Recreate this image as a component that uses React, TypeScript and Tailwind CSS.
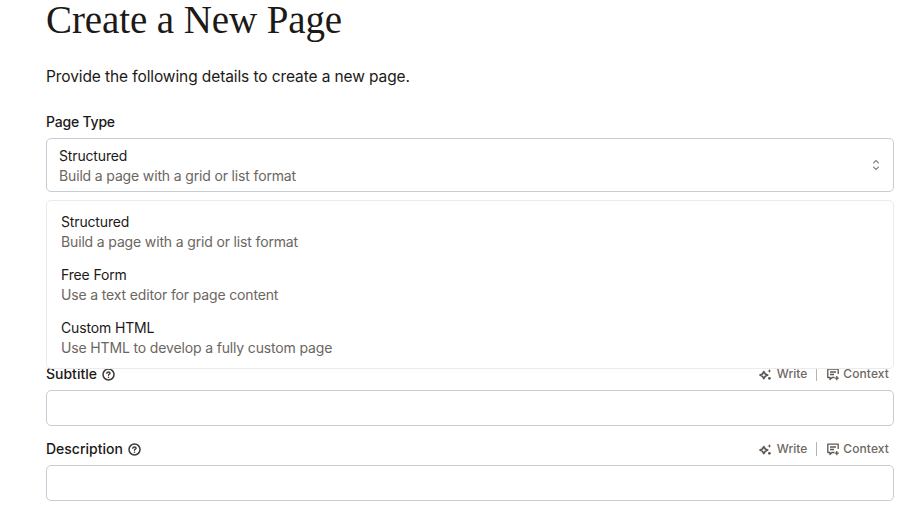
import React from "react";

const sans = "font-['Inter','Liberation_Sans',sans-serif]";

function Help() {
  return (
    <svg width="13" height="13" viewBox="0 0 13 13" fill="none" className="shrink-0 -ml-[1px]">
      <circle cx="6.5" cy="6.5" r="5.5" stroke="#3f3a36" strokeWidth="1.5" />
      <path d="M4.8 5.2c.2-.9.9-1.2 1.7-1.2.9 0 1.6.5 1.6 1.2 0 .9-1.4 1-1.6 2" stroke="#3f3a36" strokeWidth="1.4" strokeLinecap="round" />
      <circle cx="6.5" cy="9.2" r=".8" fill="#3f3a36" />
    </svg>
  );
}

function Actions() {
  return (
    <div className="flex items-center text-[12px] font-medium leading-4 text-[#6f6862] pr-[5px]">
      <svg width="13" height="13" viewBox="0 0 13 13" className="mr-[5px]" fill="#5f5852">
        <path d="M4.8 3.6 6.3 6l2.4 1-2.4 1.2L4.8 10.6 3.4 8.2 1 7l2.4-1z" fill="none" stroke="#5f5852" strokeWidth="1.7" strokeLinejoin="round" />
        <path d="M10.4 1l.6 1.4 1.4.6-1.4.6-.6 1.4-.6-1.4L8.4 3l1.4-.6z" />
        <circle cx="10.4" cy="10.3" r="1.4" />
      </svg>
      <span>Write</span>
      <span className="ml-[9px] mr-[10px] h-[14px] w-px bg-[#b8b3ae]" />
      <svg width="12" height="13" viewBox="0 0 12 13" fill="none" className="mr-[4px]" stroke="#5f5852" strokeWidth="1.3">
        <path d="M7.5 9.5H5L3 11.5v-2H.8V1.2h10.4V6" strokeLinejoin="round" />
        <path d="M3 4h6M3 6.5h4" />
        <path d="M9.8 8v4.2M7.8 10.1h4" />
      </svg>
      <span className="tracking-[0.1px]">Context</span>
    </div>
  );
}

function Option({ title, desc }: { title: string; desc: string }) {
  return (
    <div className="px-[14px] h-[53px] flex flex-col justify-center text-[14px] leading-5 tracking-[-0.15px]">
      <div className="text-[#1c1917]">{title}</div>
      <div className="text-[#6b6660]">{desc}</div>
    </div>
  );
}

function Field({ label }: { label: string }) {
  return (
    <div>
      <div className="flex items-center justify-between h-4">
        <div className="flex items-center gap-[6px] text-[14px] font-medium leading-5 text-[#1c1917]">
          {label}
          <Help />
        </div>
        <Actions />
      </div>
      <div className="mt-2 h-[36px] rounded-[5px] border border-[#c5ccd3] bg-white" />
    </div>
  );
}

export default function App() {
  return (
    <div className={`${sans} w-[923px] h-[525px] overflow-hidden bg-white pl-[46px] pr-[29px]`}>
      <h1 className="font-['Liberation_Serif',serif] text-[39px] leading-[40px] text-[#1c1917] h-[40px] tracking-[-0.1px]">
        Create a New Page
      </h1>
      <p className="mt-[27px] text-[15.5px] leading-5 text-[#1c1917] tracking-[-0.1px]">
        Provide the following details to create a new page.
      </p>
      <div className="mt-[25px] text-[14px] font-medium leading-5 text-[#1c1917] tracking-[-0.2px]">Page Type</div>
      <div className="relative mt-[6px]">
        <div className="h-[54px] rounded-[5px] border border-[#c5ccd3] bg-white pl-3 pr-[11px] pt-[2px] flex items-center justify-between">
          <div className="text-[14px] leading-5 tracking-[-0.15px]">
            <div className="text-[#1c1917]">Structured</div>
            <div className="text-[#6b6660]">Build a page with a grid or list format</div>
          </div>
          <svg width="12" height="14" viewBox="0 0 12 14" fill="none" stroke="#83888d" strokeWidth="1.1" strokeLinecap="round" strokeLinejoin="round" className="-mt-[2px]">
            <path d="M3.5 5 6 2.5 8.5 5" />
            <path d="M3.5 9 6 11.5 8.5 9" />
          </svg>
        </div>
        <div className="absolute left-0 right-0 top-[62px] z-10 h-[169px] rounded-[5px] border border-[#e9ebed] bg-white pt-[4px]">
          <Option title="Structured" desc="Build a page with a grid or list format" />
          <Option title="Free Form" desc="Use a text editor for page content" />
          <Option title="Custom HTML" desc="Use HTML to develop a fully custom page" />
        </div>
      </div>
      <div className="mt-[174px] flex flex-col gap-[15px]">
        <Field label="Subtitle" />
        <Field label="Description" />
      </div>
    </div>
  );
}
